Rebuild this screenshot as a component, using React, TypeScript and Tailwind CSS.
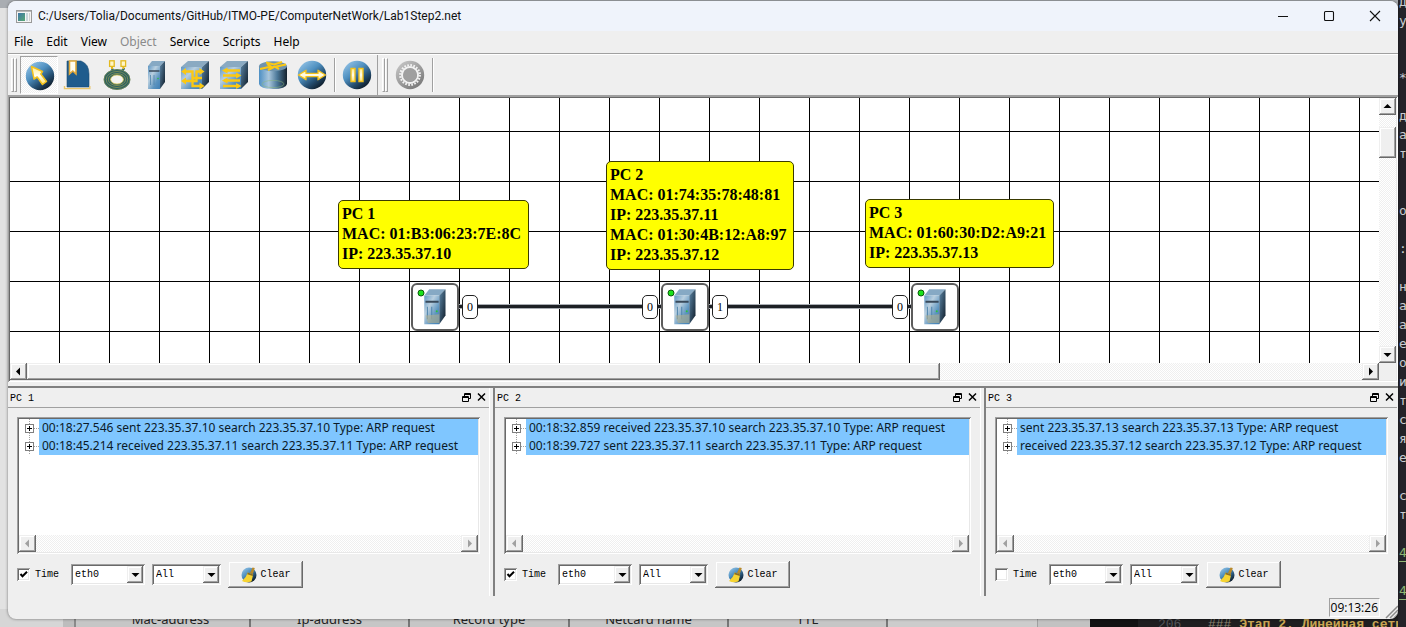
import React from "react";

const RAISED =
  "bg-[#efefef] shadow-[inset_-1px_-1px_#696969,inset_1px_1px_#efefef,inset_-2px_-2px_#a0a0a0,inset_2px_2px_#ffffff]";
const SUNKEN =
  "p-0.5 shadow-[inset_1px_1px_#a0a0a0,inset_-1px_-1px_#ffffff,inset_2px_2px_#696969,inset_-2px_-2px_#e8e8e8]";
const DITHER =
  "bg-[repeating-conic-gradient(#ffffff_0_25%,#efefef_0_50%)] bg-[length:2px_2px]";
const UI = "font-['Noto_Sans','Liberation_Sans',sans-serif]";
const TITLE = "font-['Roboto','Liberation_Sans',sans-serif]";
const CLOCK = "font-['Open_Sans','Liberation_Sans',sans-serif]";
const FIXED = "font-['Liberation_Mono',monospace]";

/* ---------- shared gradients ---------- */

function Gradients() {
  return (
    <svg className="absolute size-0" aria-hidden="true">
      <defs>
        <linearGradient id="ball" x1="0.15" y1="0.05" x2="0.85" y2="0.95">
          <stop offset="0" stopColor="#8fc0e4" />
          <stop offset="0.38" stopColor="#4f90c0" />
          <stop offset="0.68" stopColor="#254f72" />
          <stop offset="1" stopColor="#0a131c" />
        </linearGradient>
        <linearGradient id="grayBall" x1="0.15" y1="0.05" x2="0.85" y2="0.95">
          <stop offset="0" stopColor="#c4c4c4" />
          <stop offset="1" stopColor="#777777" />
        </linearGradient>
        <linearGradient id="front" x1="0" y1="0" x2="1" y2="1">
          <stop offset="0" stopColor="#5f97c4" />
          <stop offset="0.35" stopColor="#b9cfdf" />
          <stop offset="0.7" stopColor="#5b93bf" />
          <stop offset="1" stopColor="#3f7fb5" />
        </linearGradient>
        <linearGradient id="side" x1="0" y1="0" x2="1" y2="1">
          <stop offset="0" stopColor="#5d87a8" />
          <stop offset="1" stopColor="#0d1a26" />
        </linearGradient>
        <linearGradient id="drum" x1="0" y1="0" x2="1" y2="0">
          <stop offset="0" stopColor="#4d8fc4" />
          <stop offset="0.35" stopColor="#a9c6dc" />
          <stop offset="0.65" stopColor="#4c7899" />
          <stop offset="1" stopColor="#14222e" />
        </linearGradient>
        <linearGradient id="gold" x1="0" y1="0" x2="0" y2="1">
          <stop offset="0" stopColor="#ffec8a" />
          <stop offset="0.5" stopColor="#fffdf0" />
          <stop offset="1" stopColor="#ffe26a" />
        </linearGradient>
      </defs>
    </svg>
  );
}

/* ---------- toolbar icons ---------- */

function Icon({ children }: { children: React.ReactNode }) {
  return (
    <svg viewBox="0 0 30 30" className="size-[30px]" aria-hidden="true">
      {children}
    </svg>
  );
}

const Ball = () => <circle cx="15" cy="15" r="14.2" fill="url(#ball)" />;

const SelectIcon = () => (
  <Icon>
    <Ball />
    <path
      d="M6.5 5.5 L17.5 10.5 L15.8 13 L21.5 20.5 L17.5 23.5 L12.2 16 L9 18 Z"
      fill="url(#gold)"
      stroke="#f3c11c"
      strokeWidth="1.5"
      strokeLinejoin="round"
    />
  </Icon>
);

const NoteIcon = () => (
  <Icon>
    <path d="M4 1 H18 Q26 4 26 14 V27 H4 Z" fill="#1f5c8d" stroke="#1a4970" strokeWidth="0.6" />
    <path d="M1.5 26 V28.6 H26.8 V26" fill="none" stroke="#e8c56a" strokeWidth="1.4" />
    <path d="M6.5 1 H13 V14 L9.8 11 L6.5 14 Z" fill="#fffdf0" stroke="#e0a93a" strokeWidth="1.6" />
  </Icon>
);

const CableIcon = () => (
  <Icon>
    <g fill="none">
      <path d="M10 8 C10 10 11 11 13 12 M22 8 C22 10 20 11 18 12" stroke="#2e6a6a" strokeWidth="2.2" />
      <ellipse cx="15" cy="19.5" rx="9.8" ry="6.9" fill="#efefef" stroke="#2b5f63" strokeWidth="7" />
      <ellipse cx="15" cy="19.5" rx="13" ry="10" stroke="#a9a94c" strokeWidth="0.5" />
      <ellipse cx="15" cy="19.5" rx="10.8" ry="8" stroke="#a9a94c" strokeWidth="0.6" />
      <ellipse cx="15" cy="19.5" rx="8.6" ry="6" stroke="#b7b04a" strokeWidth="0.6" />
      <ellipse cx="15" cy="19.5" rx="6.4" ry="4.6" fill="#f4f4f0" stroke="#d6c03c" strokeWidth="0.8" />
    </g>
    <rect x="7.6" y="0.8" width="4.6" height="5.6" fill="#fff6c8" stroke="#e3b91e" strokeWidth="1.3" />
    <rect x="19" y="0.8" width="4.6" height="5.6" fill="#fff6c8" stroke="#e3b91e" strokeWidth="1.3" />
    <rect x="9" y="6.6" width="2" height="2.4" fill="#e3b91e" />
    <rect x="20.4" y="6.6" width="2" height="2.4" fill="#e3b91e" />
  </Icon>
);

const ComputerShape = () => (
  <>
    <path d="M7 6 L11 1 H24 L19 6 Z" fill="#86a9c4" />
    <path d="M7 6 H19 V29 H7 Z" fill="url(#front)" />
    <path d="M19 6 L24 1 V22 L19 29 Z" fill="url(#side)" />
    <path d="M8 11 H18.5" stroke="#38495a" strokeWidth="1.6" />
    <path d="M9.5 15 V25 M13 15 V25" stroke="#4e83ab" strokeWidth="0.8" />
    <circle cx="17" cy="18.5" r="0.8" fill="#2cc23c" />
  </>
);

const ComputerIcon = () => (
  <Icon>
    <ComputerShape />
  </Icon>
);

const Box = () => (
  <>
    <path d="M1 7 L8 1 H29 L22 7 Z" fill="#8aaac2" />
    <path d="M1 7 H22 V29 H1 Z" fill="url(#front)" />
    <path d="M22 7 L29 1 V22 L22 29 Z" fill="url(#side)" />
  </>
);

const HubIcon = () => (
  <Icon>
    <Box />
    <path d="M4 11.5 H12.5 V26 H20 M4 21 H16.5 V11.5 H20 M12.5 18 H22" stroke="#fbc812" strokeWidth="2.3" fill="none" />
    <path
      d="M1 11.5 L6 8 V15 Z M1 21 L6 17.5 V24.5 Z M24.5 11.5 L19.5 8 V15 Z M24.5 26 L19.5 22.5 V29.5 Z"
      fill="#fbc812"
    />
  </Icon>
);

const SwitchIcon = () => (
  <Icon>
    <Box />
    <path d="M5 10.5 H21 M4 15.5 H20 M5 20.5 H21 M4 26 H20" stroke="#fbc812" strokeWidth="2.3" />
    <path
      d="M3 10.5 L8.5 7.5 V13.5 Z M22.5 15.5 L17 12.5 V18.5 Z M3 20.5 L8.5 17.5 V23.5 Z M22.5 26 L17 23 V29 Z"
      fill="#fbc812"
    />
  </Icon>
);

const RouterIcon = () => (
  <Icon>
    <path d="M1 6 V24 Q2 29 15 29 Q28 29 29 24 V6 Z" fill="url(#drum)" />
    <ellipse cx="15" cy="6.2" rx="14" ry="5" fill="#6f93ad" />
    <ellipse cx="15" cy="24" rx="11" ry="3.6" fill="none" stroke="#8db87a" strokeWidth="0.5" />
    <path
      d="M2 9 L13 6.5 L9 4.2 M28 4.5 L17 6.8 L21 9 M8 2.6 L16 4.4 L24 2 M10 10 L16 7"
      fill="none"
      stroke="#fbc812"
      strokeWidth="2"
    />
  </Icon>
);

const SendIcon = () => (
  <Icon>
    <Ball />
    <path
      d="M1.5 15 L9 10.2 V13.4 H21 V10.2 L28.5 15 L21 19.8 V16.6 H9 V19.8 Z"
      fill="url(#gold)"
      stroke="#f3c11c"
      strokeWidth="1.3"
      strokeLinejoin="round"
    />
  </Icon>
);

const PauseIcon = () => (
  <Icon>
    <Ball />
    <path d="M9 8.5 H13 V21.5 H9 Z M17 8.5 H21 V21.5 H17 Z" fill="url(#gold)" stroke="#f3c11c" strokeWidth="1.4" />
  </Icon>
);

const GearIcon = () => (
  <Icon>
    <circle cx="15" cy="15" r="14.2" fill="url(#grayBall)" />
    <circle cx="15" cy="15" r="9.8" fill="none" stroke="#f2f2f2" strokeWidth="2.2" strokeDasharray="1.7 1.38" />
    <circle cx="15" cy="15" r="8" fill="none" stroke="#f2f2f2" strokeWidth="2" />
    <circle cx="15" cy="15" r="6.8" fill="#a0a0a0" />
  </Icon>
);

const BroomIcon = () => (
  <svg viewBox="0 0 16 16" className="size-4" aria-hidden="true">
    <circle cx="8" cy="8" r="7.5" fill="url(#ball)" />
    <path d="M11.5 0.5 L13.8 1 L11.8 7 L9 6 Z" fill="#b8892a" />
    <path d="M6.8 5.5 L12.2 7.5 L10.5 14.5 Q5 16.2 1 14 Q5 11 6.8 5.5 Z" fill="#f6d433" />
    <path d="M6.8 5.5 L12.2 7.5 L11.8 9 L6.2 7.2 Z" fill="#8a6d24" />
  </svg>
);

/* ---------- small glyphs ---------- */

function Triangle({ dir, muted }: { dir: "up" | "down" | "left" | "right"; muted?: boolean }) {
  const paths = {
    up: "M0.5 6 L4.5 2 L8.5 6 Z",
    down: "M0.5 3 L4.5 7 L8.5 3 Z",
    left: "M6 0.5 L2 4.5 L6 8.5 Z",
    right: "M3 0.5 L7 4.5 L3 8.5 Z",
  };
  return (
    <svg viewBox="0 0 9 9" className="size-[9px]" aria-hidden="true">
      <path d={paths[dir]} fill={muted ? "#a0a0a0" : "#000000"} />
    </svg>
  );
}

function ScrollButton({ dir, muted }: { dir: "up" | "down" | "left" | "right"; muted?: boolean }) {
  return (
    <button
      type="button"
      aria-label={`Scroll ${dir}`}
      disabled={muted}
      className={`flex size-[17px] shrink-0 items-center justify-center ${RAISED}`}
    >
      <Triangle dir={dir} muted={muted} />
    </button>
  );
}

/* ---------- title bar, menu, toolbar ---------- */

function TitleBar() {
  return (
    <header className={`flex h-[30px] shrink-0 items-center bg-[#eff3fb] pl-2 ${TITLE}`}>
      <svg viewBox="0 0 16 13" className="h-[13px] w-4" aria-hidden="true">
        <defs>
          <linearGradient id="app" x1="0" y1="0" x2="1" y2="1">
            <stop offset="0" stopColor="#3f77a8" />
            <stop offset="1" stopColor="#57a873" />
          </linearGradient>
        </defs>
        <rect x="0.5" y="0.5" width="15" height="12" fill="#f5f5f5" stroke="#9a9a9a" />
        <path d="M1 1.5 H15" stroke="#b9b9b9" />
        <rect x="2" y="3" width="7" height="8" fill="url(#app)" />
        <rect x="10" y="3" width="2" height="8" fill="#c9d6dc" />
        <path d="M13.5 3 V11" stroke="#d0d0d0" />
      </svg>
      <h1 className="ml-1.5 text-xs text-[#111111]">
        C:/Users/Tolia/Documents/GitHub/ITMO-PE/ComputerNetWork/Lab1Step2.net
      </h1>
      <div className="ml-auto flex">
        <button type="button" aria-label="Minimize" className="flex h-[30px] w-[46px] items-center justify-center">
          <svg viewBox="0 0 12 12" className="size-3"><path d="M1 6.5 H11" stroke="#111" /></svg>
        </button>
        <button type="button" aria-label="Maximize" className="flex h-[30px] w-[46px] items-center justify-center">
          <svg viewBox="0 0 12 12" className="size-3"><rect x="1.5" y="1.5" width="9" height="9" rx="1" fill="none" stroke="#111" strokeWidth="1.1" /></svg>
        </button>
        <button type="button" aria-label="Close" className="flex h-[30px] w-[46px] items-center justify-center">
          <svg viewBox="0 0 12 12" className="size-3"><path d="M1 1 L11 11 M11 1 L1 11" stroke="#111" strokeWidth="1.1" /></svg>
        </button>
      </div>
    </header>
  );
}

const MENUS = ["File", "Edit", "View", "Object", "Service", "Scripts", "Help"];

function MenuBar() {
  return (
    <nav className={`flex h-[23px] shrink-0 items-center gap-[13px] border-b border-[#a0a0a0] pl-1.5 text-xs ${UI}`}>
      {MENUS.map((m) => (
        <button
          key={m}
          type="button"
          disabled={m === "Object"}
          className="disabled:text-[#8a8a8a]"
        >
          {m}
        </button>
      ))}
    </nav>
  );
}

function Handle() {
  return (
    <div className="flex" aria-hidden="true">
      <div className="h-[34px] w-[3px] border border-t-white border-r-[#a0a0a0] border-b-[#a0a0a0] border-l-white" />
      <div className="h-[34px] w-[3px] border border-t-white border-r-[#a0a0a0] border-b-[#a0a0a0] border-l-white" />
    </div>
  );
}

function Separator() {
  return <div className="h-[34px] w-0.5 border-r border-l border-r-white border-l-[#a0a0a0]" />;
}

function ToolButton({ label, active, children }: { label: string; active?: boolean; children: React.ReactNode }) {
  return (
    <button
      type="button"
      aria-label={label}
      aria-pressed={active}
      className={`flex size-[38px] items-center justify-center ${
        active ? `border border-t-[#a0a0a0] border-r-white border-b-white border-l-[#a0a0a0] pt-px pl-px ${DITHER}` : ""
      }`}
    >
      {children}
    </button>
  );
}

function ToolBar() {
  return (
    <div className="flex h-[42px] shrink-0 border-t border-b border-t-white border-b-[#a0a0a0]">
      <div className="flex items-center border-r border-[#a0a0a0] pr-px pl-[3px]">
        <Handle />
        <div className="mx-[3px] flex gap-px">
          <ToolButton label="Select" active><SelectIcon /></ToolButton>
          <ToolButton label="Add note"><NoteIcon /></ToolButton>
          <ToolButton label="Add cable"><CableIcon /></ToolButton>
          <ToolButton label="Add computer"><ComputerIcon /></ToolButton>
          <ToolButton label="Add hub"><HubIcon /></ToolButton>
          <ToolButton label="Add switch"><SwitchIcon /></ToolButton>
          <ToolButton label="Add router"><RouterIcon /></ToolButton>
          <ToolButton label="Send data"><SendIcon /></ToolButton>
        </div>
        <div className="flex items-center gap-0.5">
          <Separator />
          <ToolButton label="Pause"><PauseIcon /></ToolButton>
        </div>
      </div>
      <div className="flex items-center pl-1">
        <Handle />
        <div className="mx-[3px]">
          <ToolButton label="Settings"><GearIcon /></ToolButton>
        </div>
        <Separator />
      </div>
    </div>
  );
}

/* ---------- network canvas ---------- */

function Note({ lines, className }: { lines: string[]; className: string }) {
  return (
    <div
      className={`absolute rounded-[5px] border border-[#3a3a00] bg-[#ffff00] pt-[3px] pr-[7px] pb-1 pl-[3px] font-['Liberation_Serif',serif] text-base leading-5 font-bold whitespace-nowrap text-black ${className}`}
    >
      {lines.map((l) => (
        <p key={l}>{l}</p>
      ))}
    </div>
  );
}

function Device({ className }: { className: string }) {
  return (
    <div className={`absolute size-12 rounded-md border-2 border-[#5c5c5c] bg-white ${className}`}>
      <svg viewBox="0 0 44 44" className="size-full" aria-hidden="true">
        <g transform="translate(2.5 3) scale(1.25)">
          <ComputerShape />
          <path d="M8 22 L19 21 V28 H10 Z" fill="#b9b28a" opacity="0.55" />
        </g>
        <circle cx="8" cy="8" r="3" fill="#19e219" stroke="#0c5a0c" strokeWidth="1" />
      </svg>
    </div>
  );
}

function Port({ n, className }: { n: number; className: string }) {
  return (
    <div
      className={`absolute flex h-6 w-4 items-center justify-center rounded-[5px] border border-[#222222] bg-white font-['Liberation_Serif',serif] text-xs leading-3 text-black ${className}`}
    >
      {n}
    </div>
  );
}

function Canvas() {
  return (
    <section aria-label="Network scheme" className={`flex min-h-0 flex-1 flex-col ${SUNKEN}`}>
      <div className="flex min-h-0 flex-1">
        <div className="relative flex-1 overflow-hidden bg-white bg-[linear-gradient(to_right,#000_1px,transparent_1px),linear-gradient(to_bottom,#000_1px,transparent_1px)] bg-[length:50px_50px] bg-[position:49px_33px]">
          <div className="absolute top-[206px] left-[448px] h-[5px] w-[206px] border-y border-[#a9adb3] bg-[#1d2025]" />
          <div className="absolute top-[206px] left-[698px] h-[5px] w-[206px] border-y border-[#a9adb3] bg-[#1d2025]" />
          <Port n={0} className="top-[197px] left-[452px]" />
          <Port n={0} className="top-[197px] left-[632px]" />
          <Port n={1} className="top-[197px] left-[702px]" />
          <Port n={0} className="top-[197px] left-[882px]" />
          <Device className="top-[185px] left-[401px]" />
          <Device className="top-[185px] left-[651px]" />
          <Device className="top-[185px] left-[901px]" />
          <Note
            className="top-[102px] left-[328px]"
            lines={["PC 1", "MAC: 01:B3:06:23:7E:8C", "IP: 223.35.37.10"]}
          />
          <Note
            className="top-[63px] left-[596px]"
            lines={["PC 2", "MAC: 01:74:35:78:48:81", "IP: 223.35.37.11", "MAC: 01:30:4B:12:A8:97", "IP: 223.35.37.12"]}
          />
          <Note
            className="top-[101px] left-[855px]"
            lines={["PC 3", "MAC: 01:60:30:D2:A9:21", "IP: 223.35.37.13"]}
          />
        </div>
        <div className={`flex w-[17px] shrink-0 flex-col ${DITHER}`}>
          <ScrollButton dir="up" />
          <div className={`mt-3 h-[31px] ${RAISED}`} />
          <div className="flex-1" />
          <ScrollButton dir="down" />
        </div>
      </div>
      <div className="flex pr-[17px]">
        <ScrollButton dir="left" />
        <div className={`flex-1 ${DITHER}`}>
          <div className={`h-[17px] w-[68.4%] ${RAISED}`} />
        </div>
        <ScrollButton dir="right" />
      </div>
    </section>
  );
}

/* ---------- log docks ---------- */

function Dropdown({ label, options, className }: { label: string; options: string[]; className: string }) {
  return (
    <div className={`relative h-[21px] bg-white ${SUNKEN} ${className}`}>
      <select
        aria-label={label}
        className={`block h-full w-full appearance-none bg-transparent pl-0.5 text-[10px] outline-none ${FIXED}`}
      >
        {options.map((o) => (
          <option key={o}>{o}</option>
        ))}
      </select>
      <span
        className={`pointer-events-none absolute top-0.5 right-0.5 bottom-0.5 flex w-4 items-center justify-center ${RAISED}`}
      >
        <Triangle dir="down" />
      </span>
    </div>
  );
}

function LogRow({ text }: { text: string }) {
  return (
    <li className="flex h-[18px]">
      <div className="flex w-5 shrink-0 items-center pl-1.5">
        <button type="button" aria-label="Expand" className="shrink-0">
          <svg viewBox="0 0 14 18" className="h-[18px] w-[14px]">
            <path d="M4.5 0 V18 M9 9.5 H14" stroke="#a0a0a0" strokeDasharray="1 1" />
            <rect x="0.5" y="5.5" width="8" height="8" fill="#ffffff" stroke="#808080" />
            <path d="M2 9.5 H7 M4.5 7 V12" stroke="#000000" />
          </svg>
        </button>
      </div>
      <span className={`flex-1 overflow-hidden bg-[#7fc6ff] pl-[3px] text-xs leading-[18px] whitespace-nowrap text-[#0b1a28] ${UI}`}>
        {text}
      </span>
    </li>
  );
}

interface DockProps {
  title: string;
  rows: string[];
  timed: boolean;
  className: string;
  last?: boolean;
}

function Dock({ title, rows, timed, className, last }: DockProps) {
  return (
    <section className={`flex min-w-0 ${className}`}>
      <div className={`flex min-w-0 flex-1 flex-col border-r ${last ? "border-[#efefef]" : "mr-[3px] border-white"}`}>
        <div className={`flex h-5 shrink-0 items-center border-b border-[#a0a0a0] px-0.5 text-[10px] ${FIXED}`}>
          <h2 className="pt-0.5">{title}</h2>
          <button type="button" aria-label="Float panel" className="ml-auto">
            <svg viewBox="0 0 11 11" className="size-[11px]">
              <g fill="#efefef" stroke="#000000">
                <path d="M3.5 1.5 H9.5 V6.5 H3.5 Z M3 2.5 H10" />
                <path d="M1.5 4.5 H7.5 V9.5 H1.5 Z M1 5.5 H8" />
              </g>
            </svg>
          </button>
          <button type="button" aria-label="Close panel" className="ml-1">
            <svg viewBox="0 0 11 11" className="size-[11px]">
              <path d="M2 1.5 L9 8.5 M9 1.5 L2 8.5" stroke="#000000" strokeWidth="1.5" />
            </svg>
          </button>
        </div>
        <div className="flex min-h-0 flex-1 flex-col gap-[7px] px-[9px] pt-[9px] pb-2">
          <div className={`flex min-h-0 flex-1 flex-col bg-white ${SUNKEN}`}>
            <ul className="flex-1 overflow-hidden">
              {rows.map((r) => (
                <LogRow key={r} text={r} />
              ))}
            </ul>
            <div className={`flex justify-between ${DITHER}`}>
              <ScrollButton dir="left" muted />
              <ScrollButton dir="right" muted />
            </div>
          </div>
          <div className={`flex items-center gap-[7px] text-[10px] ${FIXED}`}>
            <label className="mr-[5px] flex items-center gap-[5px]">
              <span className="relative flex size-[13px]">
                <input
                  type="checkbox"
                  defaultChecked={timed}
                  className={`peer size-[13px] appearance-none bg-white ${SUNKEN}`}
                />
                <svg
                  viewBox="0 0 13 13"
                  className="pointer-events-none absolute inset-0 hidden size-[13px] peer-checked:block"
                  aria-hidden="true"
                >
                  <path d="M3.5 6 L5.5 8.3 L10 3.7" fill="none" stroke="#000000" strokeWidth="2" />
                </svg>
              </span>
              Time
            </label>
            <Dropdown label="Interface" options={["eth0"]} className="w-[74px]" />
            <Dropdown label="Protocol" options={["All"]} className="w-[69px]" />
            <button
              type="button"
              className={`flex h-[27px] w-[75px] items-center justify-center gap-1 ${RAISED}`}
            >
              <BroomIcon />
              Clear
            </button>
          </div>
        </div>
      </div>
    </section>
  );
}

/* ---------- windows behind ---------- */

const EDITOR_LINES = [
  "д", "у", "", "", "*", "", "д", "а", "т", "", "", "о", "", ":", "", "н", "а", "а", "е", "о",
  "и", "т", "с", "я", "е", "", "с", "т", "", "4", "", "4", "",
];

const TABLE_HEADS = [
  { name: "Mac-address", width: "w-[175px] pl-4" },
  { name: "Ip-address", width: "w-[159px]" },
  { name: "Record type", width: "w-[160px]" },
  { name: "Netcard name", width: "w-[159px]" },
  { name: "TTL", width: "w-[159px]" },
];

function Backdrop() {
  return (
    <div className="absolute inset-0 flex overflow-hidden bg-[#e2e2e2]">
      <div className="flex min-w-0 flex-1 flex-col justify-end">
        <div className="h-2 shrink-0 bg-[#a9adb2]" />
        <div className="flex-1" />
        <div className="flex h-[18px]">
          <div className={`flex min-w-0 flex-1 bg-[#c6c6c6] text-[13px] leading-4 text-[#222222] ${UI}`}>
            <div className="w-[63px] shrink-0 bg-[#d6d6d6]" />
            <div className="w-[13px] shrink-0 border-r-2 border-[#8a8a8a] bg-[#bdbdbd]" />
            {TABLE_HEADS.map((h) => (
              <div key={h.name} className={`shrink-0 border-r-2 border-[#777777] pt-0.5 text-center ${h.width}`}>
                {h.name}
              </div>
            ))}
            <div className="w-[150px] shrink-0 border-r border-[#a0a0a0] bg-[#cccccc]" />
            <div className="flex-1 bg-[#c2c2c2]" />
          </div>
          <div className="flex w-[308px] shrink-0 bg-[#1e1e20] pt-2 font-['Liberation_Mono',monospace] text-[13px] leading-4 whitespace-pre">
            <div className="w-12 shrink-0 bg-[#121213]" />
            <span className="w-[70px] shrink-0 pl-5 text-[#55565a]">206</span>
            <span className="text-[#8a8470]">### </span>
            <span className="font-bold text-[#c9a552]">Этап 2. Линейная сеть</span>
          </div>
        </div>
      </div>
      <div className="-mt-2 w-2 shrink-0 bg-[#242329] pl-px font-['DejaVu_Sans_Mono',monospace] text-[13px] leading-[19px] text-[#c9ccd2]">
        {EDITOR_LINES.map((c, i) => (
          <div key={i} className={`h-[19px] ${c === "4" ? "text-[#8fb573] underline underline-offset-4" : ""}`}>
            {c}
          </div>
        ))}
      </div>
    </div>
  );
}

export default function App() {
  return (
    <div className="relative flex h-screen min-h-[500px] flex-col overflow-hidden">
      <Backdrop />
      <Gradients />
      <main className="relative mx-2 mt-px mb-2 flex min-h-0 flex-1 flex-col overflow-hidden rounded-lg bg-[#efefef] text-black shadow-[0_0_3px_#00000080]">
        <TitleBar />
        <MenuBar />
        <ToolBar />
        <Canvas />
        <div className="mt-1 flex h-[210px] shrink-0 border-t-2 border-t-[#808080]">
          <Dock
            title="PC 1"
            timed
            className="flex-[485]"
            rows={[
              "00:18:27.546 sent 223.35.37.10 search 223.35.37.10 Type: ARP request",
              "00:18:45.214 received 223.35.37.11 search 223.35.37.11 Type: ARP request",
            ]}
          />
          <Dock
            title="PC 2"
            timed
            className="flex-[489] border-l-2 border-l-[#808080]"
            rows={[
              "00:18:32.859 received 223.35.37.10 search 223.35.37.10 Type: ARP request",
              "00:18:39.727 sent 223.35.37.11 search 223.35.37.11 Type: ARP request",
            ]}
          />
          <Dock
            title="PC 3"
            timed={false}
            last
            className="flex-[412] border-l-2 border-l-[#808080]"
            rows={[
              "sent 223.35.37.13 search 223.35.37.13 Type: ARP request",
              "received 223.35.37.12 search 223.35.37.12 Type: ARP request",
            ]}
          />
        </div>
        <footer className="flex h-[23px] shrink-0 items-start justify-end pt-0.5">
          <time
            className={`h-[19px] border border-t-[#a0a0a0] border-r-white border-b-white border-l-[#a0a0a0] px-px text-xs leading-[17px] ${CLOCK}`}
          >
            09:13:26
          </time>
          <svg viewBox="0 0 18 21" className="h-[21px] w-[18px]" aria-hidden="true">
            <path d="M6 20 L18 8 M10 20 L18 12 M14 20 L18 16" stroke="#8a8a8a" strokeWidth="1.5" />
          </svg>
        </footer>
      </main>
    </div>
  );
}
